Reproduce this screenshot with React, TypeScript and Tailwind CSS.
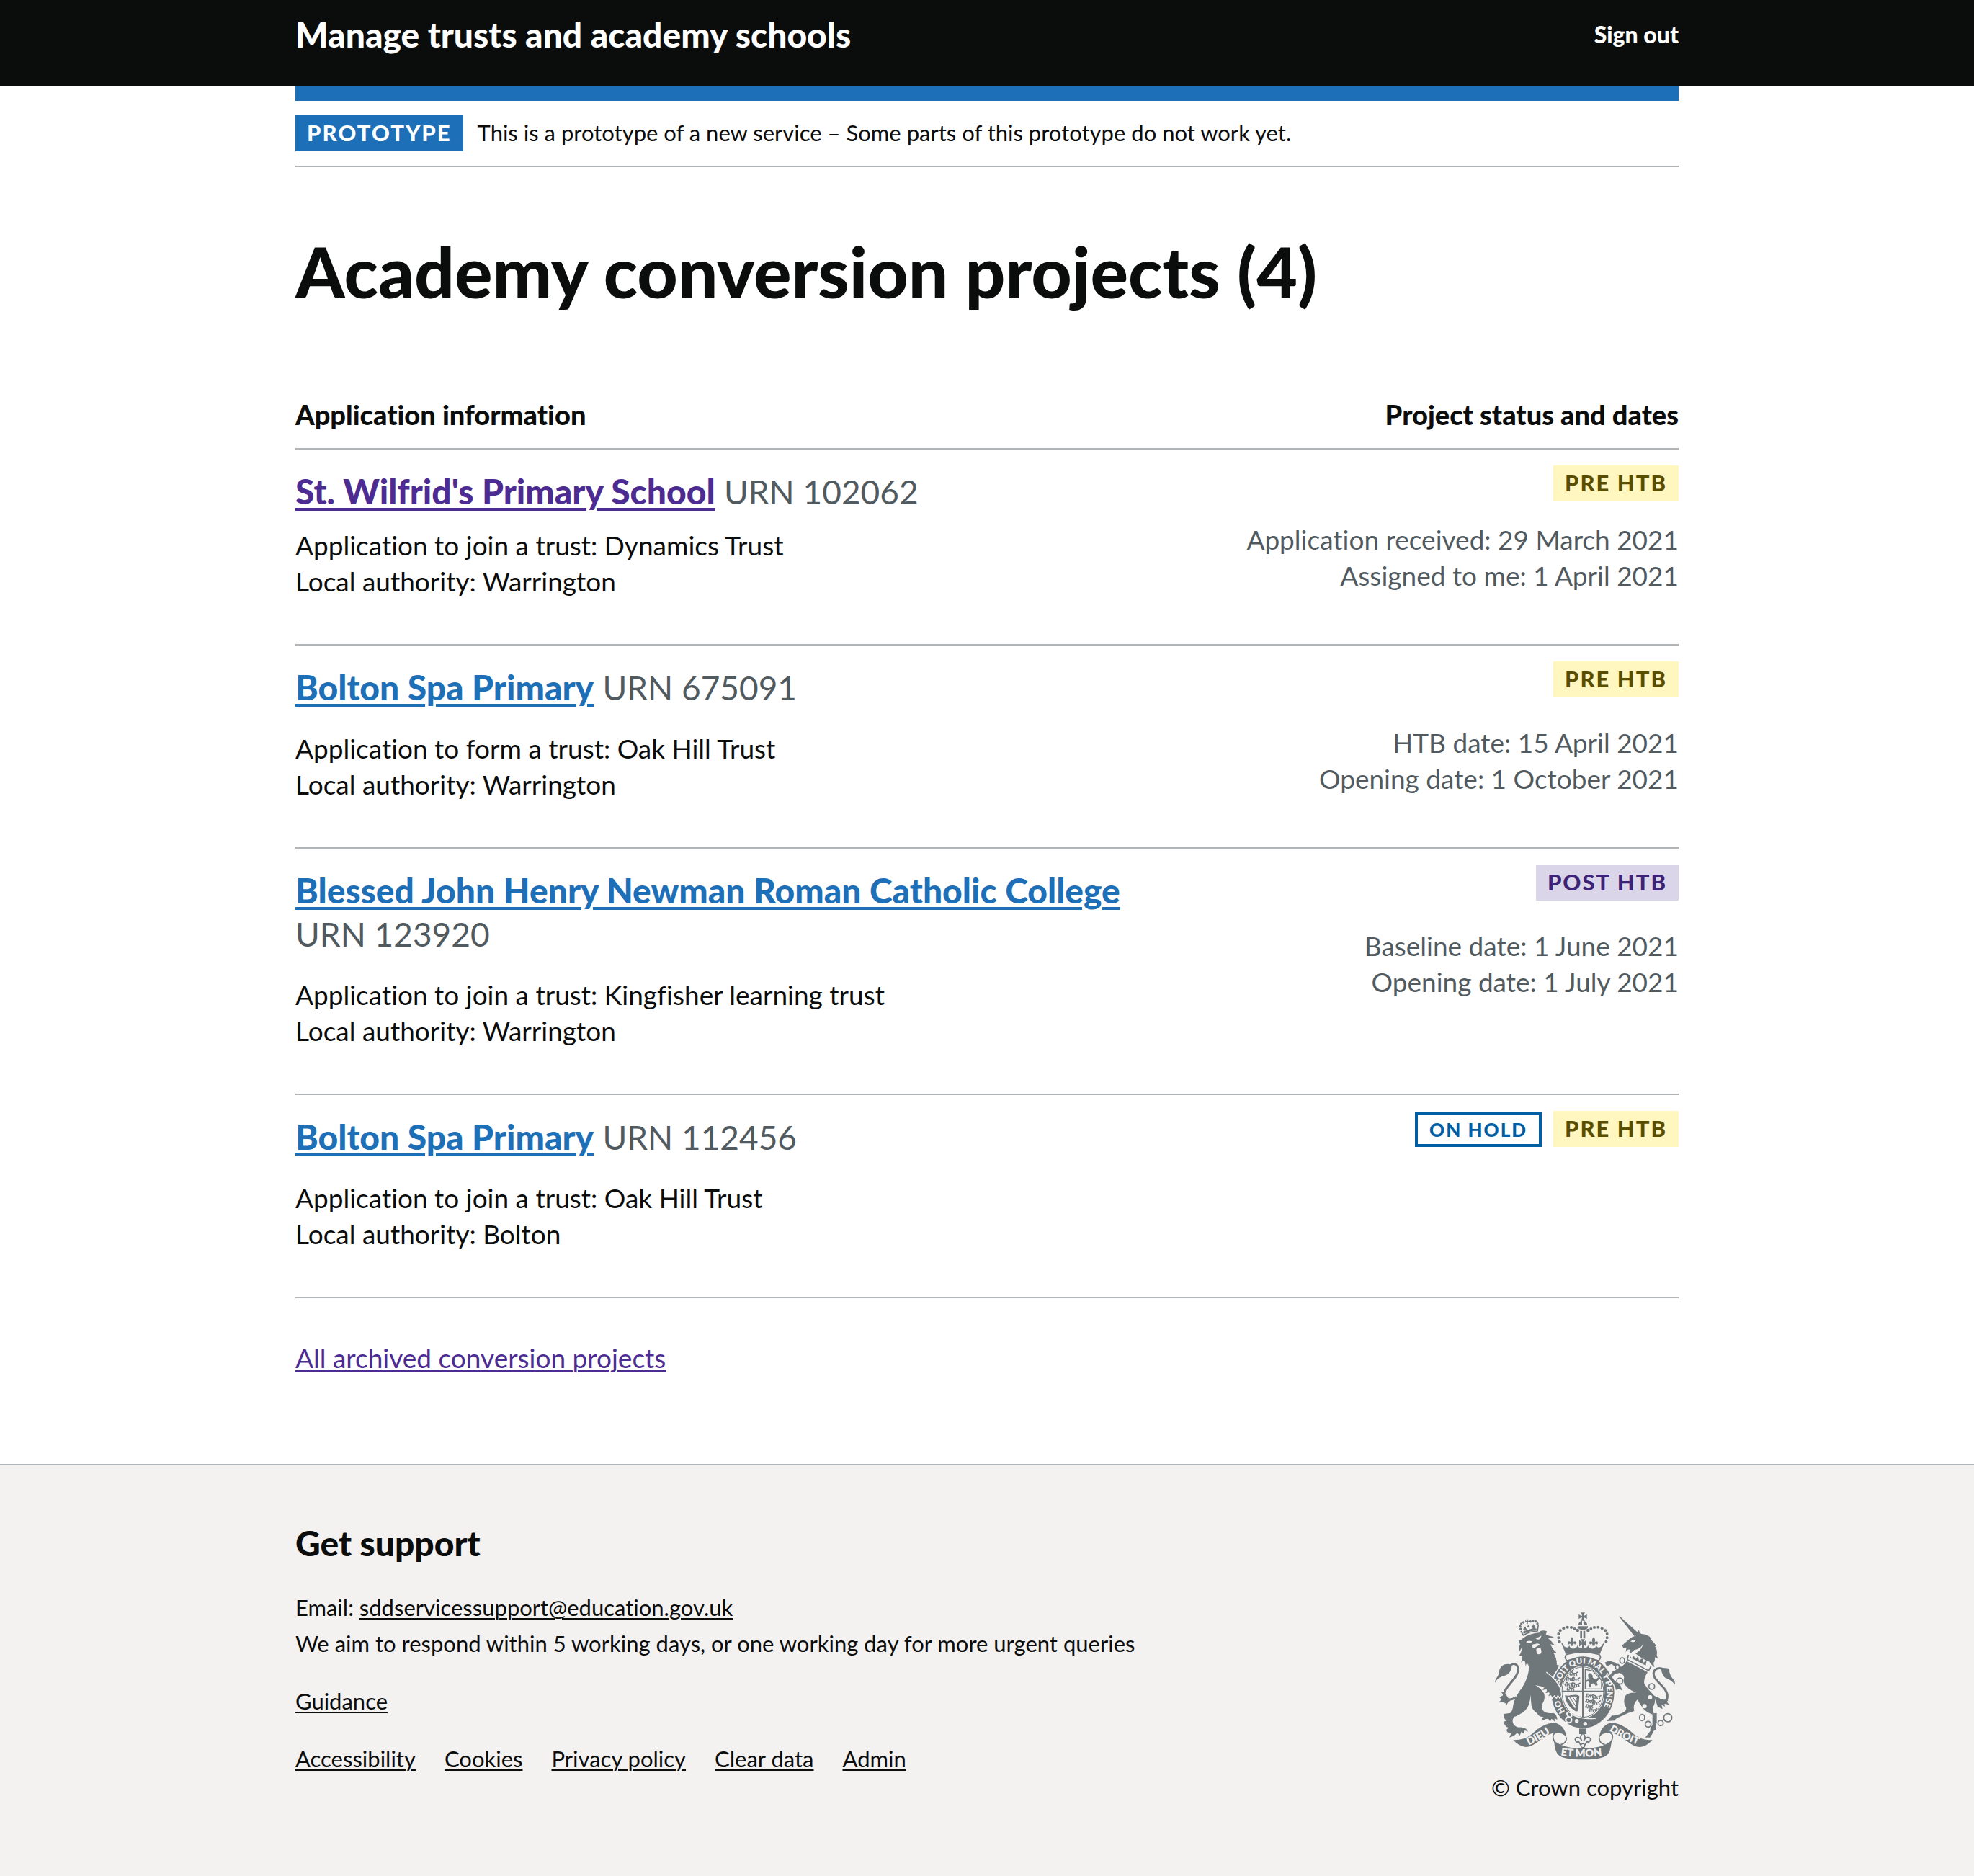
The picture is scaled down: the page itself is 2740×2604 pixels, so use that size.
import React from "react";

type TagKind = "pre" | "post" | "hold";

interface Project {
  id: string;
  name: string;
  urn: string;
  visited?: boolean;
  compact?: boolean;
  details: string[];
  tags: TagKind[];
  dates: string[];
}

const projects: Project[] = [
  {
    id: "p1",
    name: "St. Wilfrid's Primary School",
    urn: "102062",
    visited: true,
    compact: true,
    details: ["Application to join a trust: Dynamics Trust", "Local authority: Warrington"],
    tags: ["pre"],
    dates: ["Application received: 29 March 2021", "Assigned to me: 1 April 2021"],
  },
  {
    id: "p2",
    name: "Bolton Spa Primary",
    urn: "675091",
    details: ["Application to form a trust: Oak Hill Trust", "Local authority: Warrington"],
    tags: ["pre"],
    dates: ["HTB date: 15 April 2021", "Opening date: 1 October 2021"],
  },
  {
    id: "p3",
    name: "Blessed John Henry Newman Roman Catholic College",
    urn: "123920",
    details: ["Application to join a trust: Kingfisher learning trust", "Local authority: Warrington"],
    tags: ["post"],
    dates: ["Baseline date: 1 June 2021", "Opening date: 1 July 2021"],
  },
  {
    id: "p4",
    name: "Bolton Spa Primary",
    urn: "112456",
    details: ["Application to join a trust: Oak Hill Trust", "Local authority: Bolton"],
    tags: ["hold", "pre"],
    dates: [],
  },
];

const footerLinks = ["Accessibility", "Cookies", "Privacy policy", "Clear data", "Admin"];

function Tag({ kind }: { kind: TagKind }) {
  if (kind === "hold") {
    return (
      <strong className="border-4 border-[#005ea5] px-4 text-[26px] leading-[40px] font-black tracking-[2px] text-[#005ea5]">
        ON HOLD
      </strong>
    );
  }
  if (kind === "post") {
    return (
      <strong className="bg-[#dbd5e9] px-4 pb-0.5 text-[31px] leading-[48px] font-black tracking-[2px] text-[#3d2375]">
        POST HTB
      </strong>
    );
  }
  return (
    <strong className="bg-[#fff7bf] px-4 pb-0.5 text-[31px] leading-[48px] font-black tracking-[2px] text-[#594d00]">
      PRE HTB
    </strong>
  );
}

function ProjectRow({ project }: { project: Project }) {
  return (
    <tr className="border-b-2 border-[#b1b4b6] align-top">
      <td className="w-2/3 pt-7 pb-[62px]">
        <h2 className="text-[48px] leading-[60px] text-[#505a5f]">
          <a
            href="#project"
            className={
              project.visited
                ? "font-black text-[#4c2c92] underline decoration-4 underline-offset-[5px]"
                : "font-black text-[#1d70b8] underline decoration-4 underline-offset-[5px]"
            }
          >
            {project.name}
          </a>{" "}
          <span className="text-[46px] leading-none whitespace-nowrap">URN {project.urn}</span>
        </h2>
        <div className={project.compact ? "mt-5" : "mt-[30px]"}>
          {project.details.map((line) => (
            <p key={line}>{line}</p>
          ))}
        </div>
      </td>
      <td className="pt-[22px] pb-[62px] text-right text-[#505a5f]">
        <div className="flex items-end justify-end gap-4">
          {project.tags.map((tag) => (
            <Tag key={tag} kind={tag} />
          ))}
        </div>
        <div className={project.compact ? "mt-7" : "mt-[38px]"}>
          {project.dates.map((line) => (
            <p key={line}>{line}</p>
          ))}
        </div>
      </td>
    </tr>
  );
}

const pearls: [number, number, number][] = [
  [97, 181, 6],
  [101, 165, 6],
  [101, 149, 6],
  [94, 135, 6],
  [80, 126, 6],
  [64, 121, 6],
  [48, 122, 6],
  [34, 128, 6],
  [22, 134, 7],
];

const G = "#6f777b";
const L = "#f3f2f1";

function Passant({ x, y }: { x: number; y: number }) {
  return (
    <path
      transform={`translate(${x} ${y})`}
      d="M0 12l5-4 1-7 6 1 2 5h14l5-5M12 9l-2 8M18 9l4 8M28 8l3 9M6 9l-3 7M33 3l4-2"
      fill="none"
      stroke={G}
      strokeWidth="4.5"
    />
  );
}

function Fleur({ x, y, s }: { x: number; y: number; s: number }) {
  return (
    <path
      transform={`translate(${x} ${y}) scale(${s})`}
      d="M0-22C9-12 8-4 3 4C8-6 19-6 19 4C19 12 11 12 10 6C6 8 5 10 5 16H-5C-5 10-6 8-10 6C-11 12-19 12-19 4C-19-6-8-6-3 4C-8-4-9-12 0-22Z"
    />
  );
}

function Crest() {
  return (
    <svg viewBox="39 56 756 621" className="h-[207px] w-[252px]" role="img" aria-label="Royal coat of arms" fill={G}>
      <defs>
        <path id="garter-top" d="M308 392A100 119 0 0 1 508 392A100 119 0 0 1 408 511" />
        <path id="garter-left" d="M408 511A100 119 0 0 1 308 392" />
        <path id="scroll-left" d="M182 613Q238 590 298 544" />
        <path id="scroll-mid" d="M316 655Q408 668 504 653" />
        <path id="scroll-right" d="M518 552Q570 586 650 616" />
      </defs>

      {/* crown */}
      <path d="M399 60H417Q411 68 411 74Q416 74 425 67V87Q416 80 411 80Q411 86 417 94H399Q405 86 405 80Q400 80 391 87V67Q400 74 405 74Q405 68 399 60Z" />
      <path d="M389 112Q391 97 405 95V110ZM427 112Q425 97 411 95V110Z" />
      <path d="M387 117H429V122Q424 132 408 132Q392 132 387 122Z" />
      <path d="M397 136H405V168H397ZM410 136H418V168H410Z" />
      {pearls.map(([dx, y, r]) => (
        <g key={y * 200 + dx}>
          <circle cx={408 - dx} cy={y} r={r} />
          <circle cx={408 + dx} cy={y} r={r} />
        </g>
      ))}
      <path d="M318 184C325 186 326 198 335 204C343 208 350 203 352 196C354 206 362 212 372 210C382 208 386 200 386 194C388 206 396 208 408 208C420 208 428 206 430 194C430 200 434 208 444 210C454 212 462 206 464 196C466 203 473 208 481 204C490 198 491 186 498 184C494 200 484 216 480 232Q408 216 336 232C332 216 322 200 318 184Z" />
      <Fleur x={363} y={183} s={0.95} />
      <Fleur x={453} y={183} s={0.95} />
      <path d="M393 174Q402 182 405 184Q404 178 399 171H417Q412 178 411 184Q414 182 423 174V202Q414 194 411 192V208H405V192Q402 194 393 202Z" />
      <path d="M340 234Q408 216 476 234Q488 246 474 260Q408 238 342 260Q328 246 340 234Z" fill={L} stroke={G} strokeWidth="5" />

      {/* garter and shield */}
      <ellipse cx="408" cy="392" rx="131" ry="149" />
      <ellipse cx="408" cy="391" rx="91" ry="109" fill={L} />
      <ellipse cx="408" cy="391" rx="87" ry="105" fill="none" stroke={G} strokeWidth="3" />
      <path d="M408 284V498M320 388H496" stroke={G} strokeWidth="6" />
      <Passant x={352} y={306} />
      <Passant x={336} y={328} />
      <Passant x={360} y={330} />
      <Passant x={332} y={350} />
      <Passant x={362} y={352} />
      <Passant x={340} y={368} />
      <Passant x={420} y={398} />
      <Passant x={448} y={404} />
      <Passant x={418} y={420} />
      <Passant x={446} y={426} />
      <Passant x={418} y={442} />
      <Passant x={432} y={458} />
      <path d="M418 296V378H486V340M418 296L450 304L484 340" fill="none" stroke={G} strokeWidth="4" />
      <path d="M430 318l8-6 10 8 2 12 14 6 8-8 4 6-10 14 4 12-8 4-8-12-10 4-4 14-8-2 4-16-6-8-10 4 2-8 10-4Z" />
      <path d="M334 404C352 412 376 394 394 408L388 470Q376 474 372 466C350 454 336 432 334 404ZM344 412L376 460L384 412C372 404 358 416 344 412Z" fillRule="evenodd" />
      <path d="M354 413L380 452M366 411L384 440M376 408L386 424" stroke={G} strokeWidth="3" />
      <g fill={L} fontFamily="Lato, sans-serif" fontWeight="800" fontSize="34">
        <text>
          <textPath href="#garter-top" startOffset="34">SOIT QUI MAL Y PENSE</textPath>
        </text>
        <text>
          <textPath href="#garter-left" startOffset="86">HO</textPath>
        </text>
      </g>
      <path d="M366 484Q408 508 462 500" fill="none" stroke={L} strokeWidth="4" />
      <circle cx="383" cy="511" r="8" fill={L} />
      <circle cx="418" cy="523" r="8" fill={L} />
      <path d="M352 474C336 474 342 490 350 494C336 496 330 512 346 518M352 476C366 474 366 492 354 496C368 504 360 522 346 518" fill="none" stroke={L} strokeWidth="6" />

      {/* pendant */}
      <path d="M393 543H423V566H393Z" />
      <path d="M408 562C420 574 420 584 412 594C418 578 438 574 440 588C438 600 430 602 426 596C422 600 420 606 418 610H398C396 606 394 600 390 596C386 602 378 600 376 588C378 574 398 578 404 594C396 584 396 574 408 562Z" fill={L} stroke={G} strokeWidth="5" />
      <circle cx="408" cy="614" r="8" fill={L} stroke={G} strokeWidth="4" />

      {/* lion */}
      <path d="M150 137L160 154Q190 138 219 137L223 110" fill="none" stroke={G} strokeWidth="5" />
      <path d="M158 140Q188 126 214 126L216 134Q188 136 162 148Z" />
      <path d="M173 88H181Q179 93 179 95Q182 95 186 92V101Q182 98 179 98V108H175V98Q172 98 168 101V92Q172 95 175 95Q175 93 173 88ZM161 116l5 6 5-5 0 9 6 2-12 8-6-8 5-2ZM202 106l2 8 6-1-4 8 6 6-13 1 0-8-5-3 6-3Z" />
      <g>
        <circle cx="149" cy="128" r="5" />
        <circle cx="147" cy="117" r="5" />
        <circle cx="152" cy="107" r="5" />
        <circle cx="161" cy="101" r="5" />
        <circle cx="190" cy="97" r="5" />
        <circle cx="201" cy="94" r="5" />
        <circle cx="212" cy="97" r="5" />
        <circle cx="219" cy="106" r="5" />
        <circle cx="182" cy="118" r="5" />
      </g>
      <path
        stroke={L}
        strokeWidth="8"
        paintOrder="stroke"
        d="M160 166Q190 146 226 144L230 138Q242 132 258 138L254 152Q262 156 288 162Q274 166 264 168Q278 178 292 198Q282 194 274 192Q280 212 298 226Q290 228 284 226Q300 246 300 278L310 280L300 300Q284 320 282 334L256 308L292 342Q316 370 318 404L312 414L304 402L298 414L290 404L280 414L276 404L264 408Q274 396 266 392L252 396Q262 384 256 380L240 382L248 370L210 362Q232 374 246 396Q254 418 240 440Q232 456 244 470Q258 482 286 478Q300 484 302 506L290 500L292 514L278 502L272 514L264 502L250 504Q248 510 236 504L244 494Q226 496 218 480Q196 464 194 446L190 402Q190 446 168 468Q140 490 122 494Q112 506 118 522Q128 538 142 538Q172 536 180 556L166 550L164 566L152 556L146 572L134 560Q126 574 102 580L110 562Q92 564 90 548L100 540Q80 534 80 514L90 510Q76 500 80 482L106 478Q116 470 118 446Q126 408 156 372Q184 326 184 284L176 270L168 284Q172 272 164 258L150 268Q158 254 156 240L142 240Q154 226 154 206L144 222Q136 206 148 192Q140 190 142 176Q150 176 160 166Z"
      />
      <path d="M172 184Q178 174 198 180Q192 190 184 188ZM212 168Q222 164 236 156Q234 168 226 172Q218 174 212 168ZM194 196Q200 190 208 192Q222 184 230 194Q220 198 212 204Q206 210 198 206Q202 202 194 196ZM214 212Q224 204 232 208Q238 220 234 230Q224 238 216 230Z" fill={L} />
      <path d="M256 308Q296 338 318 376" fill="none" stroke={L} strokeWidth="4" />
      <path d="M98 288C124 258 150 282 134 316C122 346 74 380 80 406C84 424 106 428 130 412" fill="none" stroke={G} strokeWidth="9" />
      <path d="M42 352C42 334 60 326 60 302C66 276 96 268 112 280C112 304 98 318 84 322C66 326 52 334 42 352ZM66 388L78 404L60 412Q66 420 72 420L58 434Q84 430 92 444Q94 434 106 428L84 396Z" />

      {/* unicorn */}
      <path d="M558 75L566 79L640 146L624 160Z" />
      <path d="M572 196L600 172Q612 160 628 158Q630 140 642 133Q644 148 656 150Q680 150 694 170L688 172Q704 180 714 200L708 200Q720 216 716 236L720 252L708 246Q710 262 702 270L706 288Q690 274 684 264Q664 258 640 240L626 230Q652 220 660 188Q652 210 622 216L606 230Q600 228 604 214Q592 212 586 226L590 206Q576 214 572 196Z" />
      <path d="M606 180Q616 172 628 176Q622 188 606 180Z" fill={L} />
      <path d="M598 236L594 256L682 302L692 284" fill="none" stroke={G} strokeWidth="5" />
      <path d="M604 240l8 10 8-12 6 16 12-12 4 18 14-10 4 18 14-8-4 20-64-32Z" />
      <path
        stroke={L}
        strokeWidth="8"
        paintOrder="stroke"
        d="M590 262L678 308Q660 336 664 356Q676 376 696 396Q716 420 704 446Q694 462 704 480L716 478V520Q708 528 714 546Q700 552 698 564L688 580H668L690 552Q686 540 698 528V484Q666 474 650 446Q640 432 636 422Q620 436 620 456L622 470Q600 476 576 488Q544 500 540 510L508 512L530 488Q548 492 580 474Q592 466 588 454Q574 438 584 408Q596 392 630 394Q600 382 588 366Q574 352 580 330Q578 316 560 312Q536 314 530 330Q544 352 564 362L572 384L558 378L546 382Q544 362 514 330Q512 322 524 318Q530 298 566 294Q548 296 540 284L528 274L508 284L500 268Q516 258 534 266Q546 266 550 278Q566 290 574 282Q584 274 590 262Z"
      />
      <g fill="none" stroke={G} strokeWidth="5">
        <ellipse cx="572" cy="260" rx="10" ry="12" fill={L} />
        <ellipse cx="552" cy="286" rx="8" ry="10" fill={L} />
        <ellipse cx="562" cy="345" rx="13" ry="13" fill={L} />
        <ellipse cx="695" cy="368" rx="12" ry="12" fill={L} />
        <ellipse cx="655" cy="497" rx="11" ry="13" />
        <ellipse cx="680" cy="525" rx="12" ry="12" />
        <ellipse cx="732" cy="520" rx="11" ry="11" />
        <circle cx="762" cy="498" r="17" />
      </g>
      <circle cx="688" cy="413" r="9" fill={L} />
      <circle cx="665" cy="450" r="9" fill={L} />
      <path d="M746 296C712 282 696 304 706 328C718 354 764 376 760 414C756 434 742 436 716 414" fill="none" stroke={G} strokeWidth="9" />
      <path d="M734 292Q754 288 768 294Q766 320 790 344L792 360Q776 340 752 332Q736 318 734 292ZM698 400Q726 424 764 424L758 432L768 444L748 440L750 452L736 444L740 462L720 452Q712 424 698 400Z" />

      {/* scroll */}
      <path d="M118 591Q166 592 196 566Q250 514 296 520Q336 534 340 582Q330 560 296 560Q270 560 226 594Q196 620 170 620Q144 618 118 591Z" />
      <path d="M698 591Q650 592 620 566Q566 514 520 520Q480 534 476 582Q486 560 520 560Q546 560 590 594Q620 620 646 620Q672 618 698 591Z" />
      <path d="M340 580Q340 604 316 610M284 578Q282 560 310 556M284 578Q286 600 304 612M532 578Q534 560 506 556M532 578Q530 600 512 612M476 580Q476 604 500 610" fill="none" stroke={G} strokeWidth="5" />
      <path d="M288 592Q320 624 408 626Q496 624 528 592Q524 640 510 652Q490 672 408 672Q326 672 306 652Q292 640 288 592Z" />
      <g fill={L} fontFamily="Lato, sans-serif" fontWeight="800">
        <text fontSize="44">
          <textPath href="#scroll-left">DIEU</textPath>
        </text>
        <text fontSize="44">
          <textPath href="#scroll-mid">ET MON</textPath>
        </text>
        <text fontSize="42">
          <textPath href="#scroll-right">DROIT</textPath>
        </text>
      </g>
    </svg>
  );
}

export default function App() {
  return (
    <div className="flex min-h-screen flex-col bg-white font-['Lato',sans-serif] text-[37px] leading-[50px] text-[#0b0c0c] [font-variant-ligatures:none]">
      <header className="bg-[#0b0c0c] px-8 text-white">
        <div className="mx-auto flex max-w-[1920px] items-center justify-between pt-[18px] pb-[42px] leading-[60px] font-black">
          <a href="#home" className="text-[48px]">
            Manage trusts and academy schools
          </a>
          <a href="#sign-out" className="text-[32px]">
            Sign out
          </a>
        </div>
      </header>

      <div className="px-8">
        <div className="mx-auto max-w-[1920px]">
          <div className="h-5 bg-[#1d70b8]" />
          <div className="flex items-center gap-5 border-b-2 border-[#b1b4b6] py-5 text-[31px]">
            <strong className="bg-[#1d70b8] px-4 pb-0.5 leading-[48px] font-black tracking-[2px] text-white">
              PROTOTYPE
            </strong>
            <span className="pb-0.5 leading-[48px]">
              This is a prototype of a new service – Some parts of this prototype do not work yet.
            </span>
          </div>

          <main className="pt-[94px] pb-[122px]">
            <h1 className="text-[98px] leading-[100px] font-black">Academy conversion projects (4)</h1>
            <table className="mt-[124px] w-full border-collapse text-left">
              <thead>
                <tr className="border-b-2 border-[#b1b4b6] text-[38px]">
                  <th scope="col" className="pb-[22px] font-black">
                    Application information
                  </th>
                  <th scope="col" className="pb-[22px] text-right font-black">
                    Project status and dates
                  </th>
                </tr>
              </thead>
              <tbody>
                {projects.map((project) => (
                  <ProjectRow key={project.id} project={project} />
                ))}
              </tbody>
            </table>
            <p className="mt-[58px]">
              <a href="#archived" className="text-[#4c2c92] underline decoration-2 underline-offset-[3px]">
                All archived conversion projects
              </a>
            </p>
          </main>
        </div>
      </div>

      <footer className="grow border-t-2 border-[#b1b4b6] bg-[#f3f2f1] px-8 pt-[78px] pb-[90px] text-[31px]">
        <div className="mx-auto flex max-w-[1920px] items-end justify-between gap-8">
          <div className="pb-10">
            <h2 className="text-[48px] leading-[60px] font-black">Get support</h2>
            <p className="mt-[34px]">
              Email:{" "}
              <a
                href="mailto:sddservicessupport@education.gov.uk"
                className="underline decoration-2 underline-offset-[3px]"
              >
                sddservicessupport@education.gov.uk
              </a>
            </p>
            <p>We aim to respond within 5 working days, or one working day for more urgent queries</p>
            <p className="mt-[30px]">
              <a href="#guidance" className="underline decoration-2 underline-offset-[3px]">
                Guidance
              </a>
            </p>
            <ul className="mt-[30px] flex flex-wrap gap-x-10">
              {footerLinks.map((label) => (
                <li key={label}>
                  <a href="#footer" className="underline decoration-2 underline-offset-[3px]">
                    {label}
                  </a>
                </li>
              ))}
            </ul>
          </div>
          <div className="flex flex-col items-center gap-3">
            <Crest />
            <a href="#copyright">© Crown copyright</a>
          </div>
        </div>
      </footer>
    </div>
  );
}
